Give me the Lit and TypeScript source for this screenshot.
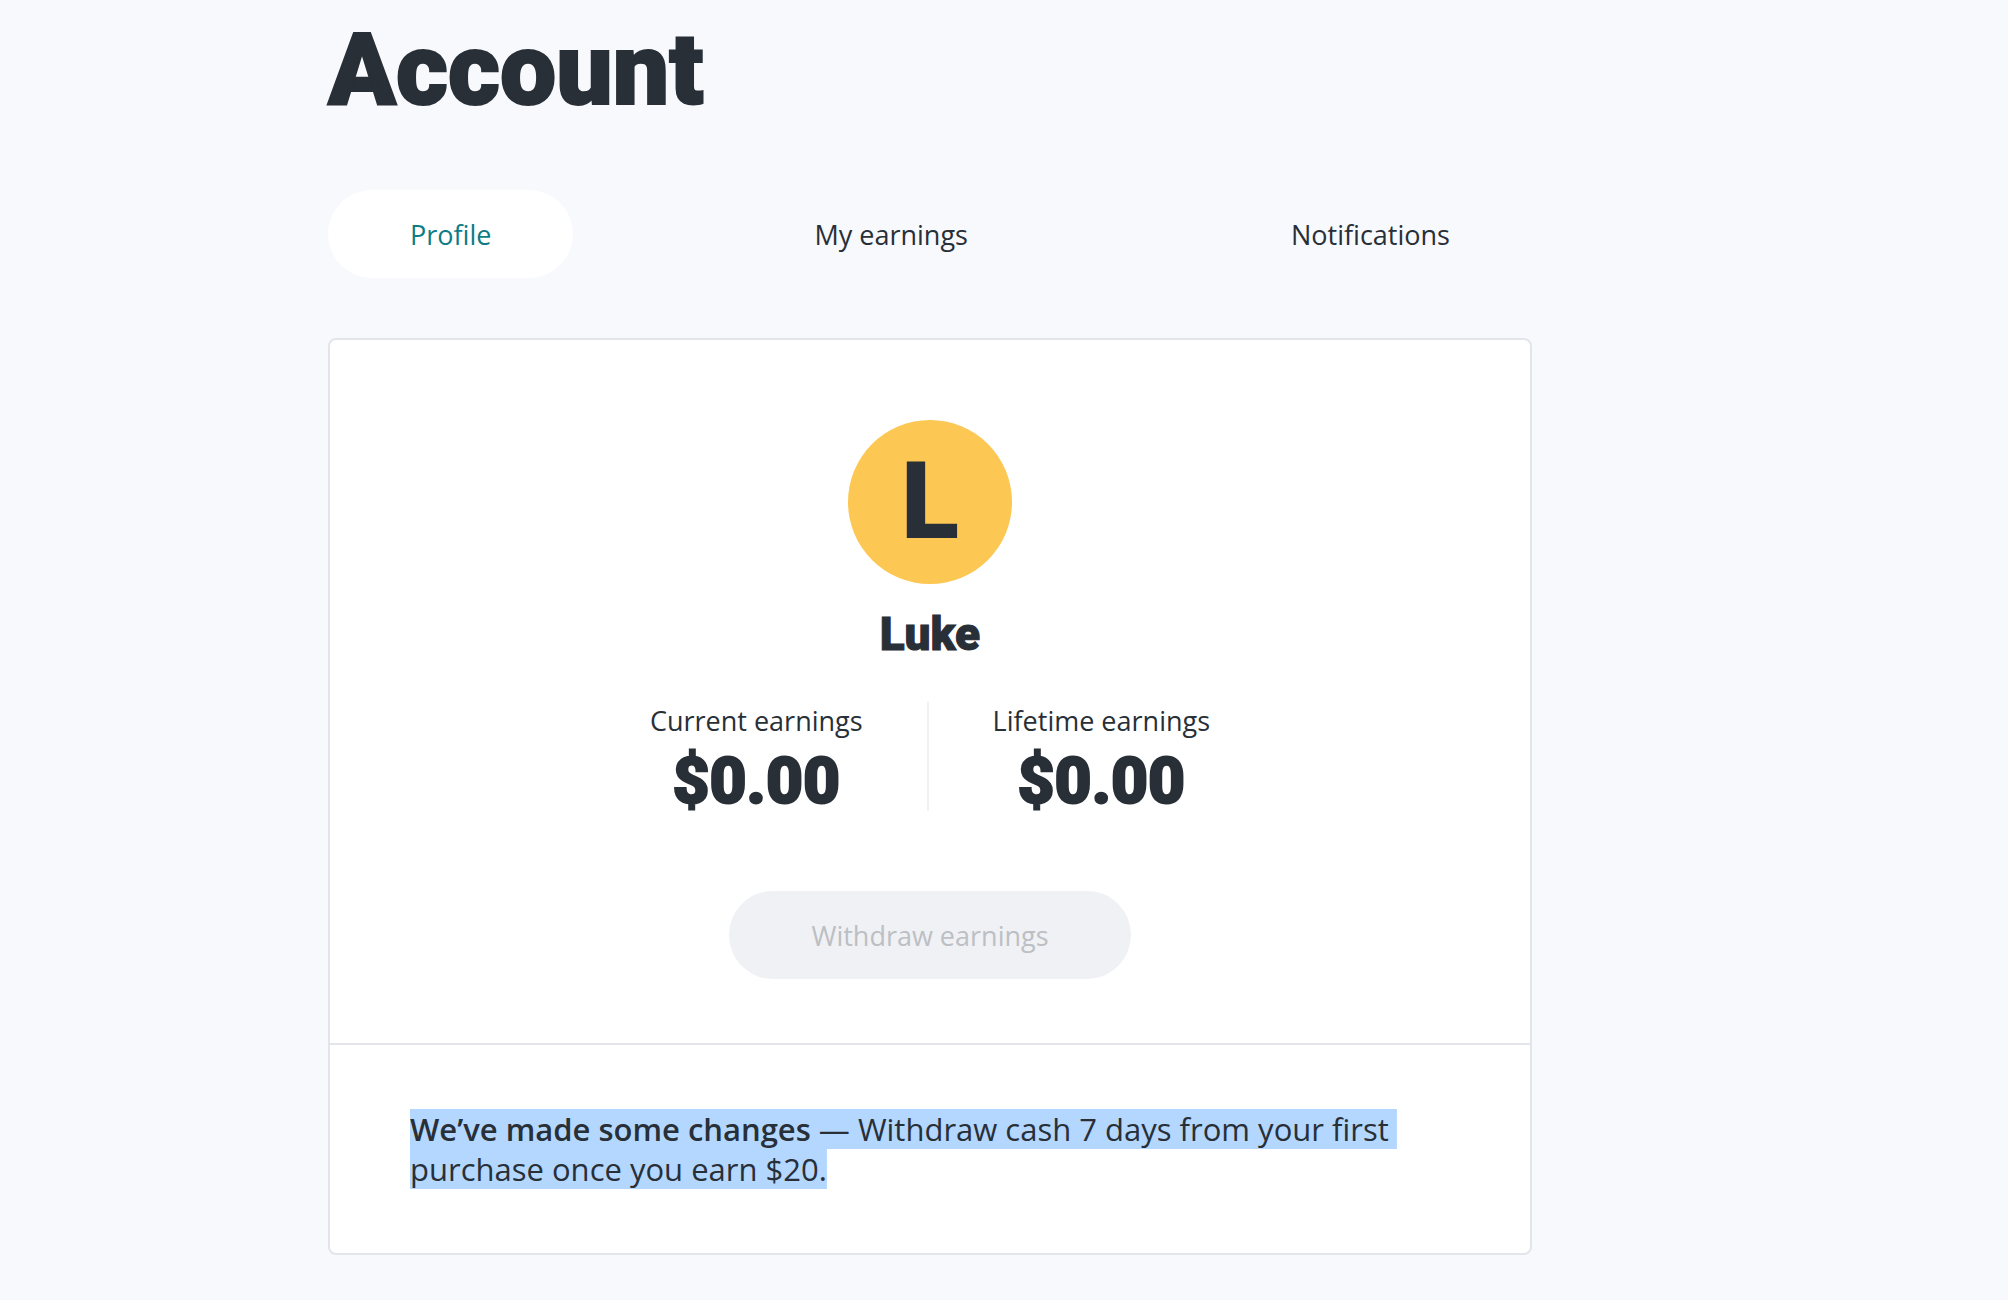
import { LitElement, html, css } from "lit";
import { customElement, property, state } from "lit/decorators.js";
import { classMap } from "lit/directives/class-map.js";

@customElement("earnings-stat")
class EarningsStat extends LitElement {
  @property() label = "";
  @property() value = "";

  static styles = css`
    :host {
      display: block;
      text-align: center;
    }
    .stat {
      display: grid;
      gap: 13px;
      margin: 0;
    }
    .label {
      line-height: 38px;
    }
    .value {
      margin: 0;
      font-family: Roboto, sans-serif;
      font-size: 64px;
      font-weight: 900;
      line-height: 58px;
      -webkit-text-stroke: 2px currentColor;
    }
  `;

  render() {
    return html`
      <dl class="stat">
        <dt class="label">${this.label}</dt>
        <dd class="value">${this.value}</dd>
      </dl>
    `;
  }
}

@customElement("app-root")
class AppRoot extends LitElement {
  @state() private tab = "Profile";

  private tabs = ["Profile", "My earnings", "Notifications"];

  static styles = css`
    :host {
      display: block;
      min-height: 100vh;
      background: #f8f9fd;
      color: #282f37;
      font-family: "Open Sans", sans-serif;
      font-size: 27px;
      font-weight: 400;
    }
    .page {
      display: grid;
      grid-template-columns: 82fr minmax(0, 301fr) 119fr;
      padding: 10px 0 44px;
    }
    .content {
      grid-column: 2;
    }
    .title {
      margin: 0 0 60px;
      font-family: Roboto, sans-serif;
      font-size: 100px;
      font-weight: 900;
      line-height: 120px;
      -webkit-text-stroke: 2px currentColor;
    }
    .tabs {
      display: flex;
      flex-wrap: wrap;
      justify-content: space-between;
      margin-bottom: 60px;
    }
    .pill {
      padding: 27px 82px 25px;
      border: 0;
      border-radius: 44px;
      background: transparent;
      color: inherit;
      font: inherit;
      line-height: 36px;
    }
    .tabs .pill {
      cursor: pointer;
    }
    .tabs .active {
      background: #fff;
      color: #0d7c85;
    }
    .card {
      border: 2px solid #e4e5ea;
      border-radius: 8px;
      background: #fff;
    }
    .summary {
      display: flex;
      flex-direction: column;
      align-items: center;
      padding: 80px 80px 64px;
    }
    .avatar {
      display: grid;
      place-items: center;
      width: 164px;
      height: 164px;
      border-radius: 50%;
      background: #fcc752;
      font-family: Roboto, sans-serif;
      font-size: 107px;
      font-weight: 900;
      line-height: 164px;
    }
    .name {
      margin: 22px 0 40px;
      font-family: Roboto, sans-serif;
      font-size: 46px;
      font-weight: 900;
      line-height: 56px;
      -webkit-text-stroke: 1px currentColor;
    }
    .stats {
      display: flex;
      gap: 64px;
      margin-bottom: 80px;
    }
    .rule {
      width: 2px;
      background: #f0f1f5;
    }
    .withdraw {
      background: #f0f1f5;
      color: #bcbfc3;
    }
    .note {
      margin: 0;
      padding: 64px 80px;
      border-top: 2px solid #e4e5ea;
      font-size: 31px;
      line-height: 40px;
      white-space: break-spaces;
    }
    .highlight {
      background: linear-gradient(#b3d7ff, #b3d7ff) center / 100% 40px no-repeat;
      box-decoration-break: clone;
      -webkit-box-decoration-break: clone;
      color: inherit;
    }
    .lead {
      font-weight: 600;
    }
  `;

  render() {
    return html`
      <main class="page">
        <div class="content">
          <h1 class="title">Account</h1>
          <nav class="tabs" aria-label="Account sections">
            ${this.tabs.map(
              (name) => html`<button
                type="button"
                class=${classMap({ pill: true, active: name === this.tab })}
                aria-pressed=${name === this.tab ? "true" : "false"}
                @click=${() => (this.tab = name)}
              >${name}</button>`
            )}
          </nav>
          <section class="card">
            <div class="summary">
              <div class="avatar" aria-hidden="true">L</div>
              <h2 class="name">Luke</h2>
              <div class="stats">
                <earnings-stat label="Current earnings" value="$0.00"></earnings-stat>
                <div class="rule"></div>
                <earnings-stat label="Lifetime earnings" value="$0.00"></earnings-stat>
              </div>
              <button type="button" class="pill withdraw" disabled>Withdraw earnings</button>
            </div>
            <p class="note"><mark class="highlight"><strong class="lead">We’ve made some changes</strong> — Withdraw cash 7 days from your first purchase once you earn $20.</mark></p>
          </section>
        </div>
      </main>
    `;
  }
}
